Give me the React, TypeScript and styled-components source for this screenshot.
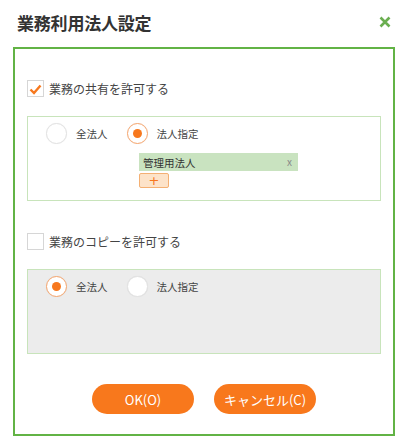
import React from "react";
import * as styledComponents from "styled-components";

const styled = styledComponents.default;
const { createGlobalStyle } = styledComponents;

const GlobalStyle = createGlobalStyle`
  html, body {
    margin: 0;
    padding: 0;
    background: #fff;
  }
  body {
    font-family: "Noto Sans CJK JP", "Noto Sans", sans-serif;
    color: #333;
  }
`;

type RadioOption = { label: string; checked: boolean };

function RadioRow({ options }: { options: RadioOption[] }) {
  return (
    <RadioGroup>
      {options.map(o => (
        <RadioItem key={o.label}>
          <Radio $checked={o.checked} />
          <RadioLabel>{o.label}</RadioLabel>
        </RadioItem>
      ))}
    </RadioGroup>
  );
}

export default function App() {
  return (
    <>
      <GlobalStyle />
      <Dialog>
        <Header>
          <Title>業務利用法人設定</Title>
          <Close aria-label="閉じる">
            <svg width="12" height="12" viewBox="0 0 12 12">
              <path
                d="M1.5 1.5 L10.5 10.5 M10.5 1.5 L1.5 10.5"
                stroke="#6aae50"
                strokeWidth="2.6"
                strokeLinecap="butt"
              />
            </svg>
          </Close>
        </Header>

        <Frame>
          <CheckRow $top={31}>
            <CheckBox $checked>
              <svg width="13" height="11" viewBox="0 0 13 11">
                <path
                  d="M1.5 5.5 L5 9 L11.5 1.5"
                  fill="none"
                  stroke="#f7781e"
                  strokeWidth="2.4"
                />
              </svg>
            </CheckBox>
            <CheckLabel>業務の共有を許可する</CheckLabel>
          </CheckRow>

          <Panel $muted={false}>
            <RadioRow
              options={[
                { label: "全法人", checked: false },
                { label: "法人指定", checked: true },
              ]}
            />
            <TagArea>
              <Tag>
                <span>管理用法人</span>
                <TagRemove>x</TagRemove>
              </Tag>
              <AddButton>+</AddButton>
            </TagArea>
          </Panel>

          <CheckRow $top={32}>
            <CheckBox $checked={false} />
            <CheckLabel>業務のコピーを許可する</CheckLabel>
          </CheckRow>

          <Panel $muted>
            <RadioRow
              options={[
                { label: "全法人", checked: true },
                { label: "法人指定", checked: false },
              ]}
            />
          </Panel>

          <Buttons>
            <PillButton>OK(O)</PillButton>
            <PillButton>キャンセル(C)</PillButton>
          </Buttons>
        </Frame>
      </Dialog>
    </>
  );
}

const Dialog = styled.div`
  width: 407px;
  height: 448px;
  box-sizing: border-box;
  padding: 0 12px 0 13px;
`;

const Header = styled.div`
  height: 47px;
  display: flex;
  align-items: center;
  justify-content: space-between;
  padding: 0 4px 3px 4px;
  box-sizing: border-box;
`;

const Title = styled.h1`
  margin: 0;
  font-size: 17px;
  font-weight: 700;
  color: #333;
  letter-spacing: -0.2px;
`;

const Close = styled.button`
  border: 0;
  background: none;
  padding: 0;
  width: 12px;
  height: 12px;
  margin-right: 0;
  display: flex;
  cursor: pointer;
`;

const Frame = styled.div`
  height: 389px;
  box-sizing: border-box;
  border: 2px solid #62b345;
  padding: 0 12px;
  display: flex;
  flex-direction: column;
`;

const CheckRow = styled.label<{ $top: number }>`
  display: flex;
  align-items: center;
  gap: 5px;
  margin-top: ${p => p.$top}px;
  height: 17px;
`;

const CheckBox = styled.span<{ $checked: boolean }>`
  width: 17px;
  height: 17px;
  box-sizing: border-box;
  border: 1px solid #d6d6d6;
  background: #fff;
  display: flex;
  align-items: center;
  justify-content: center;
  padding-top: 1px;
`;

const CheckLabel = styled.span`
  font-size: 12px;
  color: #444;
`;

const Panel = styled.div<{ $muted: boolean }>`
  margin-top: 19px;
  height: 85px;
  box-sizing: border-box;
  border: 1px solid #c8e4bb;
  background: ${p => (p.$muted ? "#ececec" : "#fff")};
  padding: 6px 0 0 18px;
`;

const RadioGroup = styled.div`
  display: flex;
  align-items: center;
  gap: 19px;
`;

const RadioItem = styled.label`
  display: flex;
  align-items: center;
  gap: 9px;
`;

const Radio = styled.span<{ $checked: boolean }>`
  width: 21px;
  height: 21px;
  box-sizing: border-box;
  border-radius: 50%;
  background: #fff;
  border: 1px solid ${p => (p.$checked ? "#f7a56c" : "#e2e2e2")};
  box-shadow: 0 0 1px rgba(0, 0, 0, 0.08);
  display: flex;
  align-items: center;
  justify-content: center;

  &::after {
    content: "";
    width: 9px;
    height: 9px;
    border-radius: 50%;
    background: #f7781e;
    display: ${p => (p.$checked ? "block" : "none")};
  }
`;

const RadioLabel = styled.span`
  font-size: 10.5px;
  color: #444;
`;

const TagArea = styled.div`
  margin: 9px 0 0 93px;
  display: flex;
  flex-direction: column;
  align-items: flex-start;
  gap: 2px;
`;

const Tag = styled.div`
  width: 159px;
  height: 18px;
  box-sizing: border-box;
  background: #c9e3c0;
  display: flex;
  align-items: center;
  justify-content: space-between;
  padding: 0 6px 0 4px;
  font-size: 10.5px;
  color: #333;
`;

const TagRemove = styled.span`
  font-size: 10px;
  color: #8a8a8a;
  line-height: 1;
`;

const AddButton = styled.button`
  width: 30px;
  height: 15px;
  box-sizing: border-box;
  border: 1px solid #f4b073;
  border-radius: 2px;
  background: #fde3c9;
  color: #f7781e;
  font-family: "DejaVu Sans", sans-serif;
  font-size: 13px;
  line-height: 1;
  padding: 0;
  display: flex;
  align-items: center;
  justify-content: center;
  cursor: pointer;
`;

const Buttons = styled.div`
  margin-top: 30px;
  display: flex;
  justify-content: center;
  gap: 20px;
`;

const PillButton = styled.button`
  width: 102px;
  height: 30px;
  border: 0;
  border-radius: 15px;
  background: #f8781c;
  color: #fff;
  font-family: "Noto Sans CJK JP", "Noto Sans", sans-serif;
  font-size: 13px;
  padding: 0;
  cursor: pointer;
`;
